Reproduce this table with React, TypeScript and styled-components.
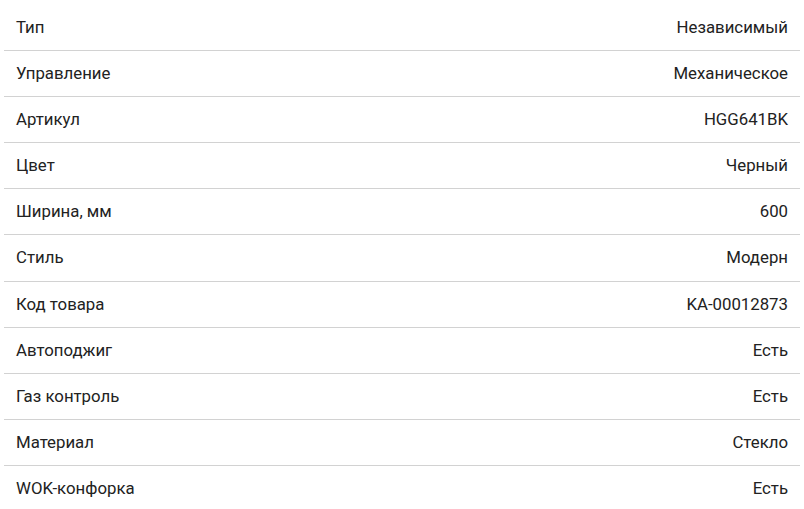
import React from "react";
import styled, { createGlobalStyle } from "styled-components";

const Global = createGlobalStyle`
  html, body { margin: 0; padding: 0; background: #fff; }
  body { font-family: Roboto, "Noto Sans", sans-serif; }
`;

const Table = styled.div`
  margin: 5px 4px 0 4px;
  display: flex;
  flex-direction: column;
`;

const Row = styled.div<{ $last?: boolean }>`
  display: flex;
  justify-content: space-between;
  align-items: center;
  padding: 12px 12px;
  line-height: 21.1px;
  font-size: 16.8px;
  color: #222222;
  border-bottom: ${(p) => (p.$last ? "none" : "1px solid #d2d2d2")};
`;

const Label = styled.span``;
const Value = styled.span`
  text-align: right;
`;

const rows: [string, string][] = [
  ["Тип", "Независимый"],
  ["Управление", "Механическое"],
  ["Артикул", "HGG641BK"],
  ["Цвет", "Черный"],
  ["Ширина, мм", "600"],
  ["Стиль", "Модерн"],
  ["Код товара", "KA-00012873"],
  ["Автоподжиг", "Есть"],
  ["Газ контроль", "Есть"],
  ["Материал", "Стекло"],
  ["WOK-конфорка", "Есть"],
];

export default function App() {
  return (
    <>
      <Global />
      <Table>
        {rows.map(([k, v], i) => (
          <Row key={k} $last={i === rows.length - 1}>
            <Label>{k}</Label>
            <Value>{v}</Value>
          </Row>
        ))}
      </Table>
    </>
  );
}
